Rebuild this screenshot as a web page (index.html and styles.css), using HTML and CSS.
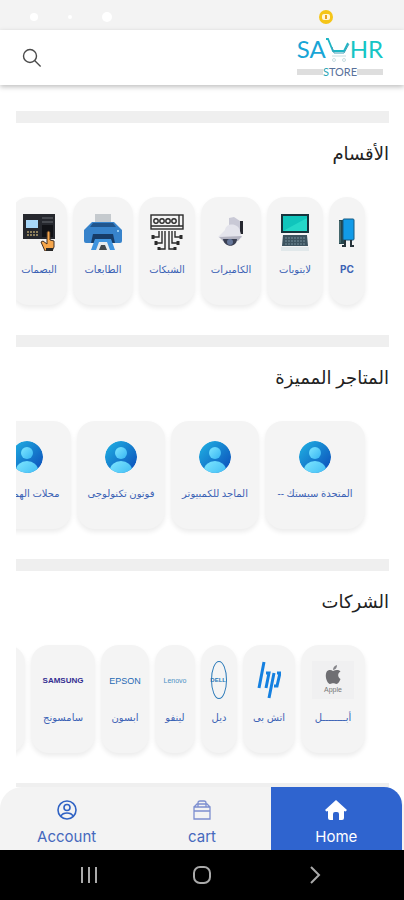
FILE: index.html
```html
<!DOCTYPE html>
<html lang="ar">
<head>
  <meta charset="UTF-8">
  <meta name="viewport" content="width=device-width, initial-scale=1.0">
  <title>Sahr Store</title>
  <link rel="stylesheet" href="styles.css">
</head>
<body>
  <!-- shared icons -->
  <svg class="defs" width="0" height="0" aria-hidden="true">
    <defs>
      <linearGradient id="userBg" x1="0" y1="0" x2="1" y2="1">
        <stop offset="0" stop-color="#20b4e4"/>
        <stop offset="1" stop-color="#0b49b8"/>
      </linearGradient>
      <linearGradient id="userFg" x1="0" y1="0" x2="1" y2="1">
        <stop offset="0" stop-color="#7fe6ff"/>
        <stop offset="1" stop-color="#35b5f2"/>
      </linearGradient>
      <clipPath id="userClip"><circle cx="16" cy="16" r="16"/></clipPath>
      <symbol id="user" viewBox="0 0 32 32">
        <g clip-path="url(#userClip)">
          <circle cx="16" cy="16" r="16" fill="url(#userBg)"/>
          <circle cx="16" cy="12" r="6" fill="url(#userFg)"/>
          <ellipse cx="16" cy="29" rx="11" ry="9" fill="url(#userFg)"/>
        </g>
      </symbol>
    </defs>
  </svg>

  <div class="app">
    <div class="status">
      <span class="status-left"><i class="dot small"></i><i class="dot tiny"></i><i class="dot"></i></span>
      <svg class="status-badge" viewBox="0 0 16 16" width="16" height="16">
        <circle cx="8" cy="8" r="7" fill="#f5c518"/>
        <rect x="4" y="5" width="8" height="6" rx="2" fill="#fff6d8"/>
        <rect x="7" y="6" width="2" height="4" fill="#e8a020"/>
      </svg>
    </div>

    <header class="header">
      <button class="search" aria-label="Search">
        <svg viewBox="0 0 20 20" width="20" height="20" fill="none" stroke="#4a4a4a" stroke-width="1.4">
          <circle cx="8" cy="8" r="6.5"/>
          <path d="M12.6 12.6L18.6 18.6"/>
        </svg>
      </button>
      <a class="logo" href="#">
        <span class="logo-top">
          <span class="logo-sa">SA</span>
          <svg viewBox="0 0 24 26" width="24" height="26" fill="none">
            <path d="M0 2h2l5 12h11l4-8" stroke="#1db5c4" stroke-width="1.8"/>
            <path d="M6 10l2 6h10l5-9" stroke="#3f9fb8" stroke-width="1"/>
            <path d="M6 19h14" stroke="#c9dfe2"/>
            <circle cx="8" cy="23" r="1.5" stroke="#c9dfe2"/>
            <circle cx="18" cy="23" r="1.5" stroke="#c9dfe2"/>
          </svg>
          <span class="logo-hr">HR</span>
        </span>
        <span class="logo-sub"><b>S</b>TORE</span>
      </a>
    </header>

    <main class="content" dir="rtl">
      <section class="section">
        <h2>الأقسام</h2>
        <div class="row">
          <a class="card w36" href="#">
            <svg viewBox="0 0 20 38" width="20" height="38">
              <path d="M2 7h7v24H2z" fill="#26464d"/>
              <path d="M3 8v22" stroke="#62888c"/>
              <rect x="6" y="6" width="11" height="21" rx="1" fill="#129be8" stroke="#175a82"/>
              <path d="M8 27v6H5M14 27v6h3" stroke="#27343a" stroke-width="2" fill="none"/>
            </svg>
            <span class="name pc">PC</span>
          </a>
          <a class="card w56" href="#">
            <svg viewBox="0 0 32 38" width="32" height="38">
              <rect x="2" y="1" width="28" height="19" fill="#16343d"/>
              <rect x="4" y="3" width="24" height="15" fill="#10c5bc"/>
              <path d="M4 18L28 5v13z" fill="#24d8c8"/>
              <path d="M4 22h24l1 11H3z" fill="#3c535f"/>
              <path d="M6 25h20M6 28h20M6 31h20" stroke="#75909b" stroke-dasharray="2 1"/>
              <path d="M2 34h28v4H2z" fill="#e1e8ea"/>
            </svg>
            <span class="name">لابتوبات</span>
          </a>
          <a class="card w60" href="#">
            <svg viewBox="0 0 30 38" width="30" height="38">
              <path d="M22 8h5v13h-5z" fill="#25272f"/>
              <path d="M13 5l5-1 6 4v12l-11-4z" fill="#c9c9d6"/>
              <path d="M9 17c1-8 14-7 15 1l2 7-12 3-12-4z" fill="#e4e4ec"/>
              <path d="M3 24l23-1-4 5H7z" fill="#b3b3c1"/>
              <path d="M7 26h14c0 9-13 9-14 0z" fill="#3a3f52"/>
              <circle cx="14" cy="29" r="3" fill="#66779a"/>
            </svg>
            <span class="name">الكاميرات</span>
          </a>
          <a class="card w56" href="#">
            <svg viewBox="0 0 36 38" width="36" height="38" fill="none" stroke="#2b2b2b" stroke-width="1.4">
              <rect x="2" y="2" width="32" height="14"/>
              <path d="M2 13h32M30 2v11"/>
              <circle cx="7" cy="8" r="2.2"/><circle cx="13" cy="8" r="2.2"/>
              <circle cx="19" cy="8" r="2.2"/><circle cx="25" cy="8" r="2.2"/>
              <path d="M10 18v6H4M13 18v12H7M16 18v18h-6M20 18v18h6M23 18v12h6M26 18v6h6"/>
              <path d="M4 22v4M7 28v4M10 34v3M26 34v3M29 28v4M32 22v4" stroke-width="3"/>
            </svg>
            <span class="name">الشبكات</span>
          </a>
          <a class="card w60" href="#">
            <svg viewBox="0 0 40 38" width="40" height="38">
              <path d="M12 1h16v12H12z" fill="#c5cace"/>
              <path d="M9 9h22l8 8v11q0 2-2 2H3q-2 0-2-2V17z" fill="#3783cb"/>
              <path d="M10 10h20l3 4H7z" fill="#21568d"/>
              <path d="M10 21h20l2 9H8z" fill="#173c67"/>
              <path d="M12 26h16l4 11H8z" fill="#3f94df"/>
              <path d="M16 29h8l3 8H13z" fill="#e8ebed"/>
              <path d="M18 32h4l2 5h-8z" fill="#43484c"/>
              <circle cx="35" cy="18" r="1" fill="#b6e3ff"/>
            </svg>
            <span class="name">الطابعات</span>
          </a>
          <a class="card w56" href="#">
            <svg viewBox="0 0 34 38" width="34" height="38">
              <rect x="1" y="1" width="32" height="25" fill="#26282e"/>
              <rect x="4" y="7" width="12" height="8" fill="#a8d8fa"/>
              <path d="M5 19h11M5 22h11" stroke="#8d805c" stroke-width="2" stroke-dasharray="2 1"/>
              <path d="M20 5h11M20 9h11" stroke="#666a71"/>
              <rect x="20" y="12" width="11" height="12" fill="#111216"/>
              <path d="M25 19q2-2 3 0v8l4 1v6l-2 4h-7l-4-9 2-1 4 3z" fill="#f6a64b" stroke="#402e22"/>
              <path d="M24 35h7v3h-7z" fill="#292929"/>
            </svg>
            <span class="name">البصمات</span>
          </a>
        </div>
      </section>

      <section class="section">
        <h2>المتاجر المميزة</h2>
        <div class="row">
          <a class="card store w100" href="#">
            <svg width="32" height="32"><use href="#user"/></svg>
            <span class="name">المتحدة سيستك --</span>
          </a>
          <a class="card store w88" href="#">
            <svg width="32" height="32"><use href="#user"/></svg>
            <span class="name">الماجد للكمبيوتر</span>
          </a>
          <a class="card store w88" href="#">
            <svg width="32" height="32"><use href="#user"/></svg>
            <span class="name">فوتون تكنولوجى</span>
          </a>
          <a class="card store w88" href="#">
            <svg width="32" height="32"><use href="#user"/></svg>
            <span class="name">محلات الهمداني</span>
          </a>
        </div>
      </section>

      <section class="section">
        <h2>الشركات</h2>
        <div class="row">
          <a class="card w64" href="#">
            <span class="apple">
              <svg viewBox="0 0 16 20" width="16" height="20">
                <path d="M8 6C6 4.600 3 4.600 1.500 7-.5 11 2 18.500 5 19c1.200 0 2-.7 3.200-.7s2 .7 3.200.7c1.800-.2 3.500-3 4.100-5-3.200-1.500-3-6 0-7.500C13.600 4.400 10.500 4.700 8 6z" fill="#6f6f73"/>
                <path d="M8 5c0-2.500 1.500-4.500 4-5 .2 2.600-1.500 4.800-4 5z" fill="#85858a"/>
              </svg>
              <small>Apple</small>
            </span>
            <span class="name">أبــــــــل</span>
          </a>
          <a class="card w52" href="#">
            <svg viewBox="0 0 24 38" width="24" height="38" fill="none" stroke="#1580e0" stroke-width="3">
              <path d="M7 1L2 27M9 12h3L9 27M17 12l-5 25M17 25h3l3-13h-3"/>
            </svg>
            <span class="name">اتش بى</span>
          </a>
          <a class="card w36" href="#">
            <span class="dell">DELL</span>
            <span class="name">ديل</span>
          </a>
          <a class="card w40" href="#">
            <span class="brand lenovo">Lenovo</span>
            <span class="name">لينفو</span>
          </a>
          <a class="card w48" href="#">
            <span class="brand epson">EPSON</span>
            <span class="name">ابسون</span>
          </a>
          <a class="card w64" href="#">
            <span class="brand samsung">SAMSUNG</span>
            <span class="name">سامسونج</span>
          </a>
          <a class="card w60" href="#"></a>
        </div>
      </section>

      <section class="section"></section>
    </main>

    <nav class="tabs">
      <a class="tab" href="#">
        <svg viewBox="0 0 20 20" width="20" height="20" fill="none" stroke="#2f62c4" stroke-width="1.6">
          <circle cx="10" cy="10" r="9"/>
          <circle cx="10" cy="7.500" r="3"/>
          <path d="M4 16c2-4 10-4 12 0"/>
        </svg>
        <span>Account</span>
      </a>
      <a class="tab" href="#">
        <svg viewBox="0 0 20 20" width="20" height="20" fill="none" stroke="#7d8fd0" stroke-width="1.300">
          <path d="M2 7h16v12H2zM2 11h16M2 7l3-3h10l3 3"/>
          <path d="M6 7V3q0-2 2-2h4q2 0 2 2v4"/>
        </svg>
        <span>cart</span>
      </a>
      <a class="tab active" href="#">
        <svg viewBox="0 0 22 20" width="22" height="20" fill="#fff">
          <path d="M11 0L22 10l-1.500 1.500L19 11v7q0 2-2 2h-3v-6q0-2-2-2h-2q-2 0-2 2v6H5q-2 0-2-2v-7l-1.500.5L0 10z"/>
        </svg>
        <span>Home</span>
      </a>
    </nav>

    <div class="system">
      <button aria-label="Recent apps">
        <svg viewBox="0 0 18 18" width="18" height="18" stroke="#aaa" stroke-width="2"><path d="M2 1v16M9 1v16M16 1v16"/></svg>
      </button>
      <button aria-label="Home screen">
        <svg viewBox="0 0 18 18" width="18" height="18" fill="none" stroke="#aaa" stroke-width="2"><rect x="1" y="1" width="16" height="16" rx="6"/></svg>
      </button>
      <button aria-label="Back">
        <svg viewBox="0 0 18 18" width="18" height="18" fill="none" stroke="#aaa" stroke-width="2"><path d="M5 1l8 8-8 8"/></svg>
      </button>
    </div>
  </div>
</body>
</html>
```
FILE: styles.css
```css
* {
  box-sizing: border-box;
}

body {
  margin: 0;
  background: #fff;
  color: #222;
  font-family: "Noto Sans", "DejaVu Sans", sans-serif;
}

a {
  color: inherit;
  text-decoration: none;
}

button {
  border: none;
  background: none;
  padding: 0;
  cursor: pointer;
}

svg {
  display: block;
  flex-shrink: 0;
}

.defs {
  position: absolute;
}

.app {
  display: flex;
  flex-direction: column;
  height: 100vh;
  overflow: hidden;
}

/* Top */
.status {
  display: flex;
  align-items: center;
  justify-content: space-between;
  height: 30px;
  padding: 4px 70px 0 30px;
  background: #f3f3f3;
  flex-shrink: 0;
}

.status-left {
  display: flex;
  align-items: center;
  gap: 30px;
}

.dot {
  width: 10px;
  height: 10px;
  border-radius: 50%;
  background: #fff;
}

.dot.small {
  width: 8px;
  height: 8px;
}

.dot.tiny {
  width: 4px;
  height: 4px;
}

.header {
  display: flex;
  align-items: center;
  justify-content: space-between;
  height: 55px;
  padding: 0 21px 0 22px;
  background: #fff;
  box-shadow: 0 2px 5px rgba(0, 0, 0, 0.25);
  flex-shrink: 0;
  z-index: 1;
}

.logo {
  display: flex;
  flex-direction: column;
  width: 86px;
  font-family: Lato, sans-serif;
}

.logo-top {
  display: flex;
  align-items: flex-start;
  justify-content: center;
  height: 28px;
  font-size: 24px;
  line-height: 24px;
}

.logo-sa {
  color: #18a5d6;
}

.logo-hr {
  color: #16c5c5;
}

.logo-sub {
  display: flex;
  align-items: center;
  height: 14px;
  font-size: 11px;
  line-height: 14px;
  color: #59719a;
}

.logo-sub b {
  color: #2aa5b5;
  font-weight: normal;
}

.logo-sub::before,
.logo-sub::after {
  content: '';
  flex: 1;
  height: 6px;
  background: #dedede;
}

/* Sections */
.content {
  flex: 1;
  min-height: 0;
  padding: 26px 15px 0 16px;
  overflow: hidden;
}

.section::before {
  content: '';
  display: block;
  height: 12px;
  background: #efefef;
}

.section h2 {
  margin: 14px 0 20px;
  font-size: 18px;
  line-height: 32px;
  font-weight: normal;
}

.row {
  display: flex;
  gap: 6px;
  padding: 8px 24px 12px 0;
  margin-bottom: 18px;
  overflow: hidden;
}

.card {
  display: flex;
  flex-direction: column;
  align-items: center;
  flex-shrink: 0;
  height: 108px;
  padding-top: 16px;
  border-radius: 18px;
  background: #f4f4f4;
  box-shadow: 0 3px 5px rgba(0, 0, 0, 0.08);
  color: #3b62b5;
}

.name {
  margin-top: 10px;
  font-size: 10px;
  line-height: 16px;
  white-space: nowrap;
}

.pc {
  font-family: Inter, sans-serif;
  font-weight: bold;
}

.store {
  padding-top: 20px;
}

.store .name {
  margin-top: 12px;
}

.w36 { width: 36px; }
.w40 { width: 40px; }
.w48 { width: 48px; }
.w52 { width: 52px; }
.w56 { width: 56px; }
.w60 { width: 60px; }
.w64 { width: 64px; }
.w88 { width: 88px; }
.w100 { width: 100px; }

/* Brands */
.brand {
  height: 38px;
  line-height: 40px;
  font-family: "Liberation Sans", sans-serif;
  direction: ltr;
}

.samsung {
  font-size: 8px;
  font-weight: bold;
  color: #332d91;
}

.epson {
  font-family: "Liberation Sans Narrow", "Liberation Sans", sans-serif;
  font-size: 9px;
  color: #2669b3;
}

.lenovo {
  font-size: 7px;
  color: #4d91c4;
}

.dell {
  width: 16px;
  height: 38px;
  border: 1px solid #2878b8;
  border-radius: 50%;
  font: bold 6px/36px "Liberation Sans", sans-serif;
  text-align: center;
  color: #2878b8;
}

.apple {
  display: flex;
  flex-direction: column;
  align-items: center;
  width: 42px;
  height: 38px;
  padding-top: 4px;
  background: #f0f0f1;
}

.apple small {
  font: 7px/10px "Liberation Sans", sans-serif;
  color: #777;
}

/* Bottom */
.tabs {
  display: grid;
  grid-template-columns: repeat(3, 1fr);
  gap: 2px;
  height: 63px;
  background: #f3f3f3;
  border-radius: 22px 22px 0 0;
  flex-shrink: 0;
}

.tab {
  display: flex;
  flex-direction: column;
  align-items: center;
  gap: 6px;
  padding-top: 13px;
  font-family: Inter, sans-serif;
  font-size: 15px;
  line-height: 22px;
  color: #4668bd;
}

.tab.active {
  margin-right: 2px;
  background: #2f64cf;
  border-radius: 0 18px 0 0;
  color: #fff;
}

.system {
  display: flex;
  align-items: center;
  justify-content: center;
  gap: 95px;
  height: 50px;
  background: #000;
  flex-shrink: 0;
}
```
